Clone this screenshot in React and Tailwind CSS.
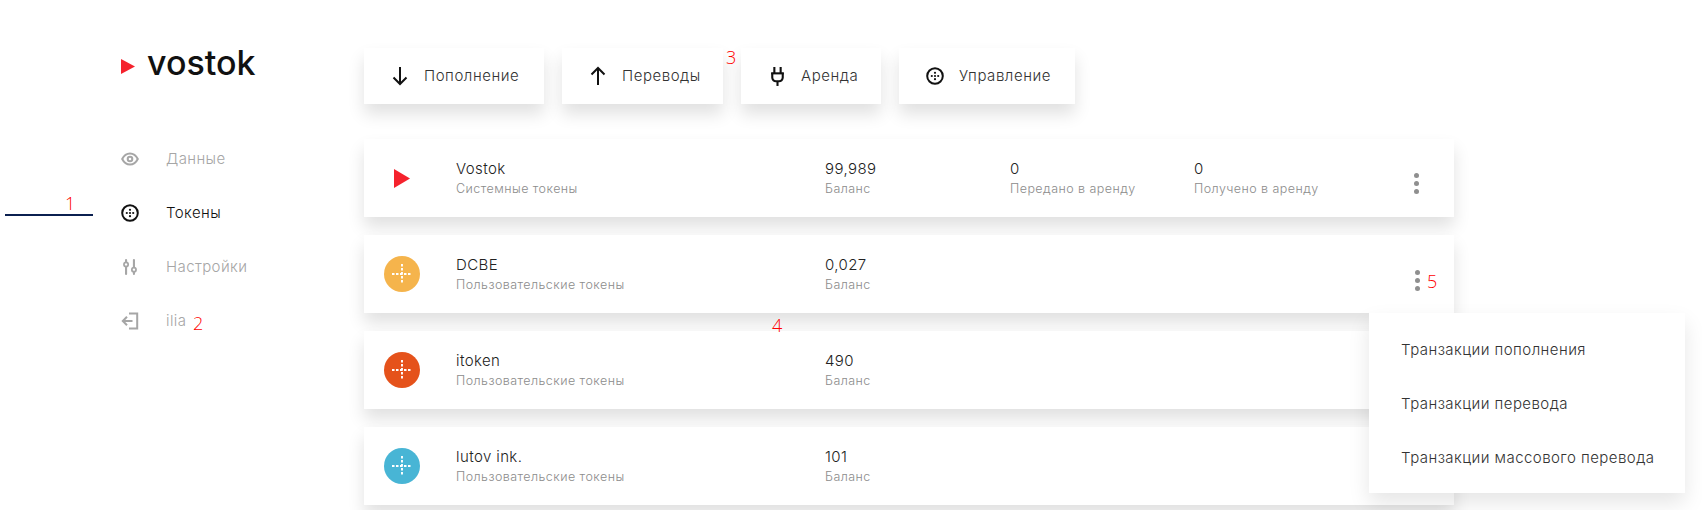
import React from 'react';

const font = { fontFamily: 'Inter, "Noto Sans", sans-serif' };

const TokenIcon = ({ className = 'w-[18px] h-[18px]' }) => (
    <svg viewBox="0 0 18 18" className={className} fill="none">
        <circle cx="9" cy="9" r="7.8" stroke="currentColor" strokeWidth="2" />
        <circle cx="9" cy="5.8" r="1.1" fill="currentColor" />
        <circle cx="9" cy="12.2" r="1.1" fill="currentColor" />
        <circle cx="5.8" cy="9" r="1.1" fill="currentColor" />
        <circle cx="12.2" cy="9" r="1.1" fill="currentColor" />
        <circle cx="9" cy="9" r="1.1" fill="currentColor" />
    </svg>
);

const EyeIcon = () => (
    <svg viewBox="0 0 18 14" className="w-[18px] h-[14px]" fill="none" stroke="currentColor" strokeWidth="2">
        <path d="M1.2 7C3 3.4 5.8 1.5 9 1.5S15 3.4 16.8 7C15 10.6 12.2 12.5 9 12.5S3 10.6 1.2 7Z" />
        <circle cx="9" cy="7" r="2.3" />
    </svg>
);

const SlidersIcon = () => (
    <svg viewBox="0 0 16 18" className="w-[14px] h-[18px]" fill="none" stroke="currentColor" strokeWidth="2.4" strokeLinecap="round">
        <path d="M3.5 1v2.5M3.5 9v8M12.5 1v8M12.5 14.5V17" />
        <circle cx="3.5" cy="6" r="2.4" strokeWidth="2" />
        <circle cx="12.5" cy="12" r="2.4" strokeWidth="2" />
    </svg>
);

const ExitIcon = () => (
    <svg viewBox="0 0 18 18" className="w-[18px] h-[18px]" fill="none" stroke="currentColor" strokeWidth="2">
        <path d="M8 1.5h8.2v15H8" />
        <path d="M11.5 9H2M6 4.8 1.8 9 6 13.2" />
    </svg>
);

const ArrowDown = () => (
    <svg viewBox="0 0 16 20" className="w-4 h-5" fill="none" stroke="currentColor" strokeWidth="2">
        <path d="M8 1v17M1.5 11.5 8 18l6.5-6.5" />
    </svg>
);

const ArrowUp = () => (
    <svg viewBox="0 0 16 20" className="w-4 h-5" fill="none" stroke="currentColor" strokeWidth="2">
        <path d="M8 19V2M1.5 8.5 8 2l6.500 6.500" />
    </svg>
);

const PlugIcon = () => (
    <svg viewBox="0 0 14 20" className="w-[15px] h-[21px]" fill="none" stroke="currentColor" strokeWidth="2">
        <path d="M4 1v6M10 1v6" />
        <path d="M1 7h12" />
        <path d="M2 6.500v4.500a3.500 3.500 0 0 0 3.500 3.500h3A3.500 3.500 0 0 0 12 11V6.500" />
        <path d="M7 14.500V19" />
    </svg>
);

const Kebab = ({ className }) => (
    <div className={`flex flex-col gap-[3px] ${className}`}>
        <span className="w-[5px] h-[5px] rounded-full bg-[#8f8f8f]" />
        <span className="w-[5px] h-[5px] rounded-full bg-[#8f8f8f]" />
        <span className="w-[5px] h-[5px] rounded-full bg-[#8f8f8f]" />
    </div>
);

// белый пунктирный крестик внутри кружка токена
const Cross = () => (
    <svg viewBox="0 0 20 20" className="w-5 h-5" fill="none" stroke="#fff" strokeWidth="1.900" strokeDasharray="2.500 1.500">
        <path d="M0 10h20M10 0v20" />
    </svg>
);

const nav = [
    { label: 'Данные', icon: <EyeIcon /> },
    { label: 'Токены', icon: <TokenIcon />, active: true },
    { label: 'Настройки', icon: <SlidersIcon /> },
    { label: 'ilia', icon: <ExitIcon /> },
];

const tabs = [
    { label: 'Пополнение', icon: <ArrowDown />, w: 'w-[180px]' },
    { label: 'Переводы', icon: <ArrowUp />, w: 'w-[161px]' },
    { label: 'Аренда', icon: <PlugIcon />, w: 'w-[140px]' },
    { label: 'Управление', icon: <TokenIcon />, w: 'w-[176px]' },
];

const tokens = [
    { name: 'DCBE', balance: '0,027', color: 'bg-[#f5b44c]' },
    { name: 'itoken', balance: '490', color: 'bg-[#e5521b]' },
    { name: 'lutov ink.', balance: '101', color: 'bg-[#48b5d5]' },
];

const Stat = ({ value, label, className }) => (
    <div className={`pt-[2px] ${className}`}>
        <div className="text-[15px] leading-5 font-light tracking-[0.4px] text-[#222]">{value}</div>
        <div className="text-[12.500px] leading-5 font-light tracking-[0.45px] text-[#8c8c8c]">{label}</div>
    </div>
);

const Mark = ({ className, children }) => (
    <span className={`absolute text-[18px] leading-none font-light text-[#ff0000] ${className}`} style={{ fontFamily: '"Open Sans", sans-serif' }}>
        {children}
    </span>
);

const App = () => {
    return (
        <div className="relative flex h-[510px] w-[1702px] overflow-hidden bg-white" style={font}>
            <aside className="w-[364px] shrink-0 pl-[121px]">
                <div className="flex h-[132px] items-center">
                    <svg viewBox="0 0 14 15" className="w-[14px] h-[15px] mr-[12px]">
                        <path d="M0 0l14 7.500L0 15Z" fill="#f5222d" />
                    </svg>
                    <span className="mb-[6px] text-[34px] font-medium leading-none text-[#111]">vostok</span>
                </div>
                <nav>
                    {nav.map((item) => (
                        <div
                            key={item.label}
                            className={`flex h-[54px] items-center ${item.active ? 'text-[#111]' : 'text-[#a6a6a6]'}`}
                        >
                            <div className="flex w-[18px] justify-center">{item.icon}</div>
                            <span className={`ml-[27px] pt-[1px] text-[15px] tracking-[0.4px] ${item.active ? 'font-[350]' : 'font-light'}`}>{item.label}</span>
                        </div>
                    ))}
                </nav>
            </aside>

            <main className="w-[1090px] pt-[48px]">
                <div className="flex gap-[18px]">
                    {tabs.map((tab) => (
                        <div
                            key={tab.label}
                            className={`flex h-[56px] items-center bg-white pl-[27px] shadow-[0_10px_16px_rgba(0,0,0,0.12)] ${tab.w}`}
                        >
                            <div className="flex w-[18px] justify-center text-[#111]">{tab.icon}</div>
                            <span className="ml-[15px] text-[15px] font-light tracking-[0.55px] text-[#333]">{tab.label}</span>
                        </div>
                    ))}
                </div>

                <div className="mt-[35px] flex flex-col gap-[18px]">
                    <div className="flex h-[78px] items-center bg-white shadow-[0_10px_16px_rgba(0,0,0,0.12)]">
                        <div className="flex w-[92px] pl-[30px]">
                            <svg viewBox="0 0 16 19" className="w-4 h-[19px]">
                                <path d="M0 0l16 9.500L0 19Z" fill="#f5222d" />
                            </svg>
                        </div>
                        <Stat value="Vostok" label="Системные токены" className="w-[369px]" />
                        <Stat value="99,989" label="Баланс" className="w-[185px]" />
                        <Stat value="0" label="Передано в аренду" className="w-[184px]" />
                        <Stat value="0" label="Получено в аренду" className="w-[220px]" />
                        <Kebab className="mt-[10px]" />
                    </div>

                    {tokens.map((token) => (
                        <div key={token.name} className="flex h-[78px] items-center bg-white shadow-[0_10px_16px_rgba(0,0,0,0.12)]">
                            <div className="w-[92px] pl-[20px]">
                                <div className={`flex h-9 w-9 items-center justify-center rounded-full ${token.color}`}>
                                    <Cross />
                                </div>
                            </div>
                            <Stat value={token.name} label="Пользовательские токены" className="w-[369px]" />
                            <Stat value={token.balance} label="Баланс" className="w-[185px]" />
                            <div className="w-[405px]" />
                            <Kebab className="mt-[12px]" />
                        </div>
                    ))}
                </div>
            </main>

            {/* выпадающее меню поверх строк */}
            <div className="absolute left-[1369px] top-[313px] w-[316px] bg-white pt-[10px] pb-[8px] pl-[32px] shadow-[0_10px_20px_rgba(0,0,0,0.1)]">
                <div className="flex h-[54px] items-center text-[15px] font-light tracking-[0.45px] text-[#333]">Транзакции пополнения</div>
                <div className="flex h-[54px] items-center text-[15px] font-light tracking-[0.45px] text-[#333]">Транзакции перевода</div>
                <div className="flex h-[54px] items-center text-[15px] font-light tracking-[0.45px] text-[#333]">Транзакции массового перевода</div>
            </div>

            {/* красные пометки на скриншоте */}
            <div className="absolute left-[5px] top-[214px] h-[2px] w-[88px] bg-[#0b2050]" />
            <Mark className="left-[65px] top-[194px]">1</Mark>
            <Mark className="left-[193px] top-[314px]">2</Mark>
            <Mark className="left-[726px] top-[48px]">3</Mark>
            <Mark className="left-[772px] top-[316px]">4</Mark>
            <Mark className="left-[1427px] top-[272px]">5</Mark>
        </div>
    );
};

export default App;
